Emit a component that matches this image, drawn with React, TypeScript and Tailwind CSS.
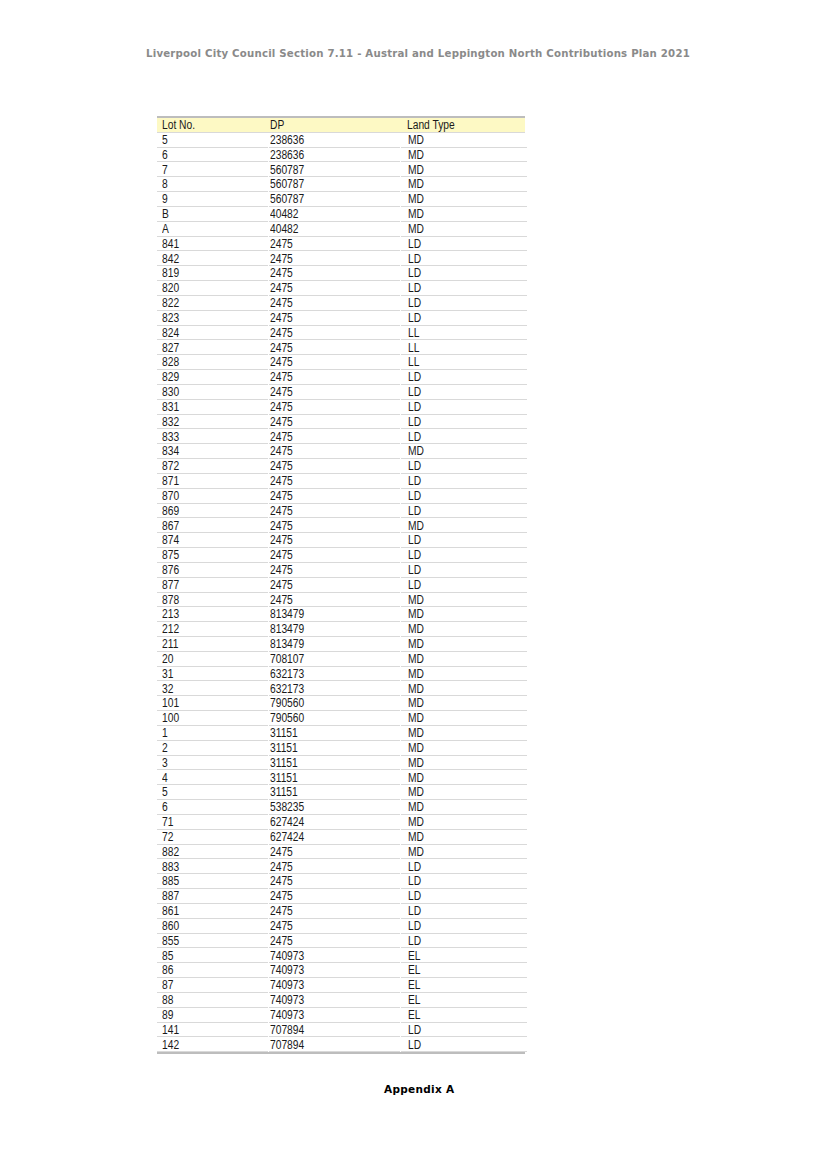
import React from "react";

const rows: [string, string, string][] = [
  ["5", "238636", "MD"],
  ["6", "238636", "MD"],
  ["7", "560787", "MD"],
  ["8", "560787", "MD"],
  ["9", "560787", "MD"],
  ["B", "40482", "MD"],
  ["A", "40482", "MD"],
  ["841", "2475", "LD"],
  ["842", "2475", "LD"],
  ["819", "2475", "LD"],
  ["820", "2475", "LD"],
  ["822", "2475", "LD"],
  ["823", "2475", "LD"],
  ["824", "2475", "LL"],
  ["827", "2475", "LL"],
  ["828", "2475", "LL"],
  ["829", "2475", "LD"],
  ["830", "2475", "LD"],
  ["831", "2475", "LD"],
  ["832", "2475", "LD"],
  ["833", "2475", "LD"],
  ["834", "2475", "MD"],
  ["872", "2475", "LD"],
  ["871", "2475", "LD"],
  ["870", "2475", "LD"],
  ["869", "2475", "LD"],
  ["867", "2475", "MD"],
  ["874", "2475", "LD"],
  ["875", "2475", "LD"],
  ["876", "2475", "LD"],
  ["877", "2475", "LD"],
  ["878", "2475", "MD"],
  ["213", "813479", "MD"],
  ["212", "813479", "MD"],
  ["211", "813479", "MD"],
  ["20", "708107", "MD"],
  ["31", "632173", "MD"],
  ["32", "632173", "MD"],
  ["101", "790560", "MD"],
  ["100", "790560", "MD"],
  ["1", "31151", "MD"],
  ["2", "31151", "MD"],
  ["3", "31151", "MD"],
  ["4", "31151", "MD"],
  ["5", "31151", "MD"],
  ["6", "538235", "MD"],
  ["71", "627424", "MD"],
  ["72", "627424", "MD"],
  ["882", "2475", "MD"],
  ["883", "2475", "LD"],
  ["885", "2475", "LD"],
  ["887", "2475", "LD"],
  ["861", "2475", "LD"],
  ["860", "2475", "LD"],
  ["855", "2475", "LD"],
  ["85", "740973", "EL"],
  ["86", "740973", "EL"],
  ["87", "740973", "EL"],
  ["88", "740973", "EL"],
  ["89", "740973", "EL"],
  ["141", "707894", "LD"],
  ["142", "707894", "LD"],
];

const cell =
  "h-[14.84px] flex items-center border-b border-[#d9d9d9] text-[12.5px] leading-none text-[#1a1a1a]";

function Txt({ children }: { children: React.ReactNode }) {
  return (
    <span className="inline-block whitespace-nowrap origin-left scale-x-[0.82] pt-[1px]">
      {children}
    </span>
  );
}

export default function App() {
  return (
    <div className="w-[816px] h-[1155px] bg-white">
      <div className="pt-[47px] pl-[146px]">
        <div className="text-[10.2px] leading-[14px] font-bold text-[#8a8a8a] tracking-[0.21px] whitespace-nowrap [font-family:'DejaVu_Sans',sans-serif]">
          Liverpool City Council Section 7.11 - Austral and Leppington North Contributions Plan 2021
        </div>
      </div>

      <div className="mt-[55px] ml-[157px] w-[368px] border-t-2 border-[#bdbdbd] border-b-2 [font-family:'Liberation_Sans',Arial,sans-serif]">
        <div className="grid grid-cols-[111px_131px_126px] bg-[#fdf9c4]">
          <div className={`${cell} pl-[5px]`}>
            <Txt>Lot No.</Txt>
          </div>
          <div className={`${cell} pl-[2px]`}>
            <Txt>DP</Txt>
          </div>
          <div className={`${cell} pl-[8px]`}>
            <Txt>Land Type</Txt>
          </div>
        </div>
        {rows.map((r, i) => (
          <div key={i} className="grid grid-cols-[111px_131px_126px] gap-x-px">
            <div className={`${cell} pl-[5px]`}>
              <Txt>{r[0]}</Txt>
            </div>
            <div className={`${cell} pl-[1px]`}>
              <Txt>{r[1]}</Txt>
            </div>
            <div className={`${cell} pl-[7px]`}>
              <Txt>{r[2]}</Txt>
            </div>
          </div>
        ))}
      </div>

      <div className="mt-[28px] pl-[384px] text-[10.5px] font-bold text-black tracking-[0.3px] [font-family:'DejaVu_Sans',sans-serif]">
        Appendix A
      </div>
    </div>
  );
}
